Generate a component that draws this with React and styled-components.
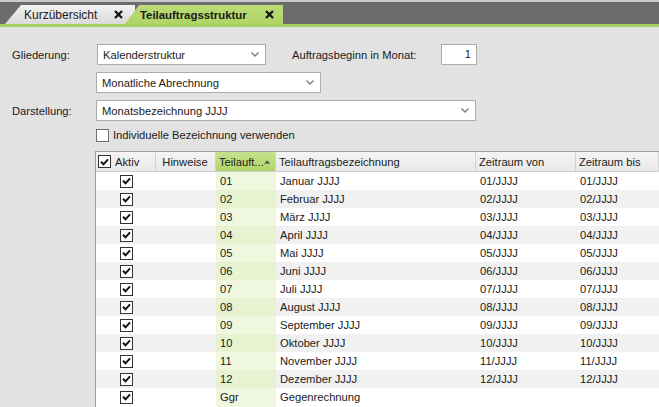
import React from "react";
import styled, { createGlobalStyle } from "styled-components";

const Global = createGlobalStyle`
  html, body { margin: 0; padding: 0; }
  body {
    background: #e2e2e2;
    font-family: "Liberation Sans", Arial, sans-serif;
    font-size: 11px;
    color: #1b1b1b;
    overflow: hidden;
  }
`;

const FS = "11.2px";

const Page = styled.div`
  width: 659px;
  height: 407px;
  display: flex;
  flex-direction: column;
  overflow: hidden;
`;

const TabBar = styled.div`
  height: 19px;
  padding-top: 3px;
  background: #6c6c6c;
  border-top: 2px solid #c9c9c9;
  border-bottom: 3px solid #a6cf5e;
  display: flex;
  align-items: flex-end;
  padding-left: 5px;
  flex-shrink: 0;
`;

const Tab = styled.div`
  position: relative;
  height: 19px;
  width: ${(p) => p.$w}px;
  margin-left: ${(p) => (p.$active ? -10 : 0)}px;
  clip-path: polygon(${(p) => (p.$active ? 14 : 16)}px 0, 100% 0, 100% 100%, 0 100%);
  background: ${(p) =>
    p.$active
      ? "linear-gradient(#bbdb77, #b0d466)"
      : "linear-gradient(#f2f2f2, #dadada)"};
  display: flex;
  align-items: center;
  justify-content: space-between;
  padding-left: ${(p) => (p.$active ? 15 : 19)}px;
  padding-right: ${(p) => (p.$active ? 9 : 12)}px;
  box-sizing: border-box;
  font-size: ${(p) => (p.$active ? "11.4px" : "12px")};
  font-weight: ${(p) => (p.$active ? 700 : 400)};
  color: #1b1b1b;
  z-index: ${(p) => (p.$active ? 2 : 1)};
`;

const Close = () => (
  <svg width="9" height="9" viewBox="0 0 9 9">
    <path d="M1 1 L8 8 M8 1 L1 8" stroke="#111" strokeWidth="2.2" />
  </svg>
);

const Content = styled.div`
  display: flex;
  flex-direction: column;
  padding-top: 17px;
  flex: 1;
`;

const FormRow = styled.div`
  display: flex;
  align-items: center;
  height: ${(p) => p.$h || 21}px;
  margin-bottom: ${(p) => p.$mb ?? 7}px;
  padding-left: ${(p) => p.$indent || 12}px;
`;

const Label = styled.div`
  width: ${(p) => p.$w || 84}px;
  font-size: ${FS};
  flex-shrink: 0;
`;

const SelectBox = styled.div`
  width: ${(p) => p.$w}px;
  height: 21px;
  box-sizing: border-box;
  background: #fff;
  border: 1px solid #acacac;
  display: flex;
  align-items: center;
  justify-content: space-between;
  padding: 0 6px 0 5px;
  font-size: ${FS};
`;

const Chevron = () => (
  <svg width="8" height="5" viewBox="0 0 8 5">
    <path d="M0.5 0.5 L4 4 L7.5 0.5" fill="none" stroke="#7a7a7a" strokeWidth="1.3" />
  </svg>
);

const Select = ({ w, children }) => (
  <SelectBox $w={w}>
    <span>{children}</span>
    <Chevron />
  </SelectBox>
);

const SideLabel = styled.div`
  margin-left: 26px;
  width: 149px;
  font-size: ${FS};
`;

const NumInput = styled.div`
  width: 36px;
  height: 21px;
  box-sizing: border-box;
  background: #fff;
  border: 1px solid #acacac;
  text-align: right;
  padding-right: 5px;
  line-height: 19px;
  font-size: ${FS};
`;

const Box = styled.div`
  width: 13px;
  height: 13px;
  box-sizing: border-box;
  border: 1px solid ${(p) => (p.$checked ? "#333" : "#6f6f6f")};
  background: #fff;
  display: flex;
  align-items: center;
  justify-content: center;
  flex-shrink: 0;
`;

const Check = ({ checked = true }) => (
  <Box $checked={checked}>
    {checked && (
      <svg width="9" height="8" viewBox="0 0 9 8">
        <path d="M1 3.8 L3.5 6.3 L8 1.3" fill="none" stroke="#111" strokeWidth="2" />
      </svg>
    )}
  </Box>
);

const CheckLabel = styled.span`
  margin-left: 4px;
  font-size: ${FS};
`;

const Grid = styled.div`
  margin-left: 95px;
  margin-top: 2px;
  flex: 1;
  background: #fff;
  border-left: 1px solid #9c9c9c;
  border-top: 1px solid #a3a3a3;
  display: flex;
  flex-direction: column;
`;

const cols = "60px 60px 60px 200px 100px 1fr";

const HeadRow = styled.div`
  display: grid;
  grid-template-columns: ${cols};
  height: 19px;
  background: linear-gradient(#f4f4f4, #e9e9e9);
  border-bottom: 1px solid #d0d0d0;
`;

const HeadCell = styled.div`
  display: flex;
  align-items: center;
  justify-content: ${(p) => p.$align || "flex-start"};
  padding-left: ${(p) => p.$pl ?? 3}px;
  padding-right: 5px;
  border-right: 1px solid #d3d3d3;
  font-size: ${FS};
  white-space: nowrap;
  overflow: hidden;
  background: ${(p) => (p.$sorted ? "linear-gradient(#c6e18d, #b3d56a)" : "transparent")};
`;

const SortArrow = () => (
  <svg width="7" height="4" viewBox="0 0 7 4" style={{ marginLeft: "auto" }}>
    <path d="M0 4 L3.5 0 L7 4 Z" fill="#555" />
  </svg>
);

const BodyRow = styled.div`
  display: grid;
  grid-template-columns: ${cols};
  height: 18px;
  background: ${(p) => (p.$alt ? "#f1f1f1" : "#fff")};
`;

const Cell = styled.div`
  display: flex;
  align-items: center;
  justify-content: ${(p) => (p.$center ? "center" : "flex-start")};
  padding-left: ${(p) => (p.$center ? 0 : 4)}px;
  font-size: ${FS};
  white-space: nowrap;
  background: ${(p) => (p.$green ? (p.$alt ? "#e6f2d0" : "#eff8df") : "transparent")};
`;

const GridFill = styled.div`
  flex: 1;
  display: grid;
  grid-template-columns: ${cols};
`;

const months = [
  "Januar", "Februar", "März", "April", "Mai", "Juni", "Juli",
  "August", "September", "Oktober", "November", "Dezember",
];

const rows = [
  ...months.map((m, i) => {
    const n = String(i + 1).padStart(2, "0");
    return { id: n, name: `${m} JJJJ`, von: `${n}/JJJJ`, bis: `${n}/JJJJ` };
  }),
  { id: "Ggr", name: "Gegenrechnung", von: "", bis: "" },
];

export default function App() {
  return (
    <Page>
      <Global />
      <TabBar>
        <Tab $w={130}>
          <span>Kurzübersicht</span>
          <Close />
        </Tab>
        <Tab $w={158} $active>
          <span>Teilauftragsstruktur</span>
          <Close />
        </Tab>
      </TabBar>
      <Content>
        <FormRow>
          <Label $w={85}>Gliederung:</Label>
          <Select w={169}>Kalenderstruktur</Select>
          <SideLabel>Auftragsbeginn in Monat:</SideLabel>
          <NumInput>1</NumInput>
        </FormRow>
        <FormRow $indent={96}>
          <Select w={225}>Monatliche Abrechnung</Select>
        </FormRow>
        <FormRow>
          <Label>Darstellung:</Label>
          <Select w={380}>Monatsbezeichnung JJJJ</Select>
        </FormRow>
        <FormRow $indent={96} $h={14} $mb={7}>
          <Check checked={false} />
          <CheckLabel>Individuelle Bezeichnung verwenden</CheckLabel>
        </FormRow>
        <Grid>
          <HeadRow>
            <HeadCell $pl={2}>
              <Check />
              <CheckLabel>Aktiv</CheckLabel>
            </HeadCell>
            <HeadCell $align="center" $pl={4}>Hinweise</HeadCell>
            <HeadCell $sorted>
              Teilauft...
              <SortArrow />
            </HeadCell>
            <HeadCell>Teilauftragsbezeichnung</HeadCell>
            <HeadCell>Zeitraum von</HeadCell>
            <HeadCell>Zeitraum bis</HeadCell>
          </HeadRow>
          {rows.map((r, i) => {
            const alt = i % 2 === 1;
            return (
              <BodyRow key={r.id} $alt={alt}>
                <Cell $center>
                  <Check />
                </Cell>
                <Cell />
                <Cell $green $alt={alt}>{r.id}</Cell>
                <Cell>{r.name}</Cell>
                <Cell>{r.von}</Cell>
                <Cell>{r.bis}</Cell>
              </BodyRow>
            );
          })}
          <GridFill>
            <Cell />
            <Cell />
            <Cell $green />
          </GridFill>
        </Grid>
      </Content>
    </Page>
  );
}
